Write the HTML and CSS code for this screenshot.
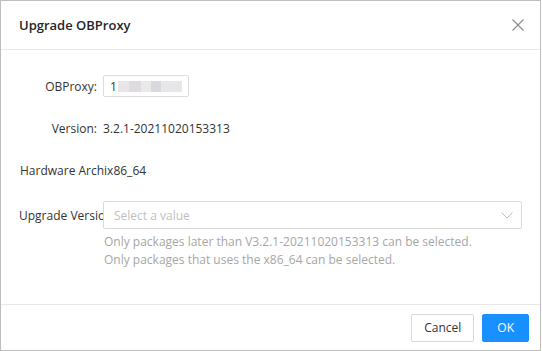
FILE: index.html
```html
<!DOCTYPE html>
<html lang="en">
<head>
    <meta charset="UTF-8">
    <meta name="viewport" content="width=device-width, initial-scale=1.0">
    <title>Upgrade OBProxy</title>
    <link rel="stylesheet" href="styles.css">
</head>
<body>
    <div class="modal">
        <header class="modal-header">
            <h1>Upgrade OBProxy</h1>
            <button class="close-btn" aria-label="Close">
                <svg width="12" height="12" viewBox="0 0 12 12">
                    <path d="M0.5 0.5 L11.5 11.5 M11.5 0.5 L0.5 11.5" stroke="#8c8c8c" stroke-width="1.1" fill="none"/>
                </svg>
            </button>
        </header>

        <section class="modal-body">
            <div class="form-row">
                <label class="form-label">OBProxy:</label>
                <div class="form-value">
                    <span class="ip-box">
                        <span class="ip-first">1</span>
                        <span class="blur b1"></span>
                        <span class="blur b2"></span>
                        <span class="blur b3"></span>
                        <span class="blur b4"></span>
                        <span class="blur b5"></span>
                    </span>
                </div>
            </div>

            <div class="form-row">
                <label class="form-label">Version:</label>
                <div class="form-value">3.2.1-20211020153313</div>
            </div>

            <div class="form-row">
                <span class="plain-text">Hardware Archix86_64</span>
            </div>

            <div class="form-row form-row-select">
                <label class="form-label form-label-left">Upgrade Version:</label>
                <div class="form-value">
                    <div class="select">
                        <span class="placeholder">Select a value</span>
                        <svg class="arrow" width="12" height="7" viewBox="0 0 12 7">
                            <path d="M0.5 0.5 L6 6 L11.5 0.5" stroke="#bfbfbf" stroke-width="1" fill="none"/>
                        </svg>
                    </div>
                </div>
            </div>

            <div class="help">
                <div>Only packages later than V3.2.1-20211020153313 can be selected.</div>
                <div>Only packages that uses the x86_64 can be selected.</div>
            </div>
        </section>

        <footer class="modal-footer">
            <button class="btn">Cancel</button>
            <button class="btn btn-primary">OK</button>
        </footer>
    </div>
</body>
</html>
```

FILE: styles.css
```css
* {
    box-sizing: border-box;
    margin: 0;
    padding: 0;
}

body {
    font-family: 'Open Sans', 'Noto Sans', sans-serif;
    font-size: 12px;
    color: #333;
    background: #fff;
}

.modal {
    width: 541px;
    height: 351px;
    border: 1px solid #bdbdbd;
    display: flex;
    flex-direction: column;
    background: #fff;
}

.modal-header {
    height: 49px;
    border-bottom: 1px solid #e8e8e8;
    display: flex;
    align-items: center;
    justify-content: space-between;
    padding: 0 16px 0 18px;
}

.modal-header h1 {
    font-size: 13px;
    font-weight: 600;
    color: #262626;
}

.close-btn {
    background: none;
    border: none;
    width: 12px;
    height: 12px;
    display: flex;
    cursor: pointer;
}

.modal-body {
    flex: 1;
    padding: 22px 18px 0 18px;
}

.form-row {
    display: flex;
    align-items: center;
    height: 28px;
    margin-bottom: 14px;
}

/* margins collapse with the row above */
.form-row-select {
    margin-top: 17px;
    margin-bottom: 0;
}

.form-label {
    width: 84px;
    flex-shrink: 0;
    text-align: right;
    padding-right: 6px;
    white-space: nowrap;
}

.form-label-left {
    text-align: left;
    overflow: hidden;
    padding-right: 0;
}

.form-value {
    flex: 1;
    display: flex;
    align-items: center;
}

.plain-text {
    padding-left: 1px;
}

.ip-box {
    display: flex;
    align-items: center;
    width: 86px;
    height: 22px;
    border: 1px solid #dcdcdc;
    border-radius: 2px;
    padding: 0 6px;
}

.ip-first {
    margin-right: 1px;
}

.blur {
    display: inline-block;
    height: 11px;
    background: #e4e4e4;
}

.b1 { width: 12px; background: #e8e6e8; }
.b2 { width: 12px; background: #dedbdf; }
.b3 { width: 11px; background: #e9e9ea; }
.b4 { width: 10px; background: #d9d8dc; }
.b5 { width: 22px; background: #e7e6e8; }

.select {
    flex: 1;
    height: 28px;
    border: 1px solid #d9d9d9;
    border-radius: 2px;
    display: flex;
    align-items: center;
    justify-content: space-between;
    padding: 0 8px 0 10px;
}

.placeholder {
    color: #bfbfbf;
}

.help {
    margin-top: 4px;
    padding-left: 103px;
    margin-left: -18px;
    color: #a6a6a6;
    line-height: 18px;
}

.modal-footer {
    height: 46px;
    border-top: 1px solid #e8e8e8;
    display: flex;
    justify-content: flex-end;
    align-items: center;
    gap: 8px;
    padding: 0 11px 0 0;
}

.btn {
    font-family: 'Open Sans', 'Noto Sans', sans-serif;
    font-size: 12px;
    height: 28px;
    padding: 0 12px;
    border: 1px solid #d9d9d9;
    border-radius: 2px;
    background: #fff;
    color: #333;
    cursor: pointer;
}

.btn-primary {
    background: #1890ff;
    border-color: #1890ff;
    color: #fff;
    padding: 0 14px;
}
```
